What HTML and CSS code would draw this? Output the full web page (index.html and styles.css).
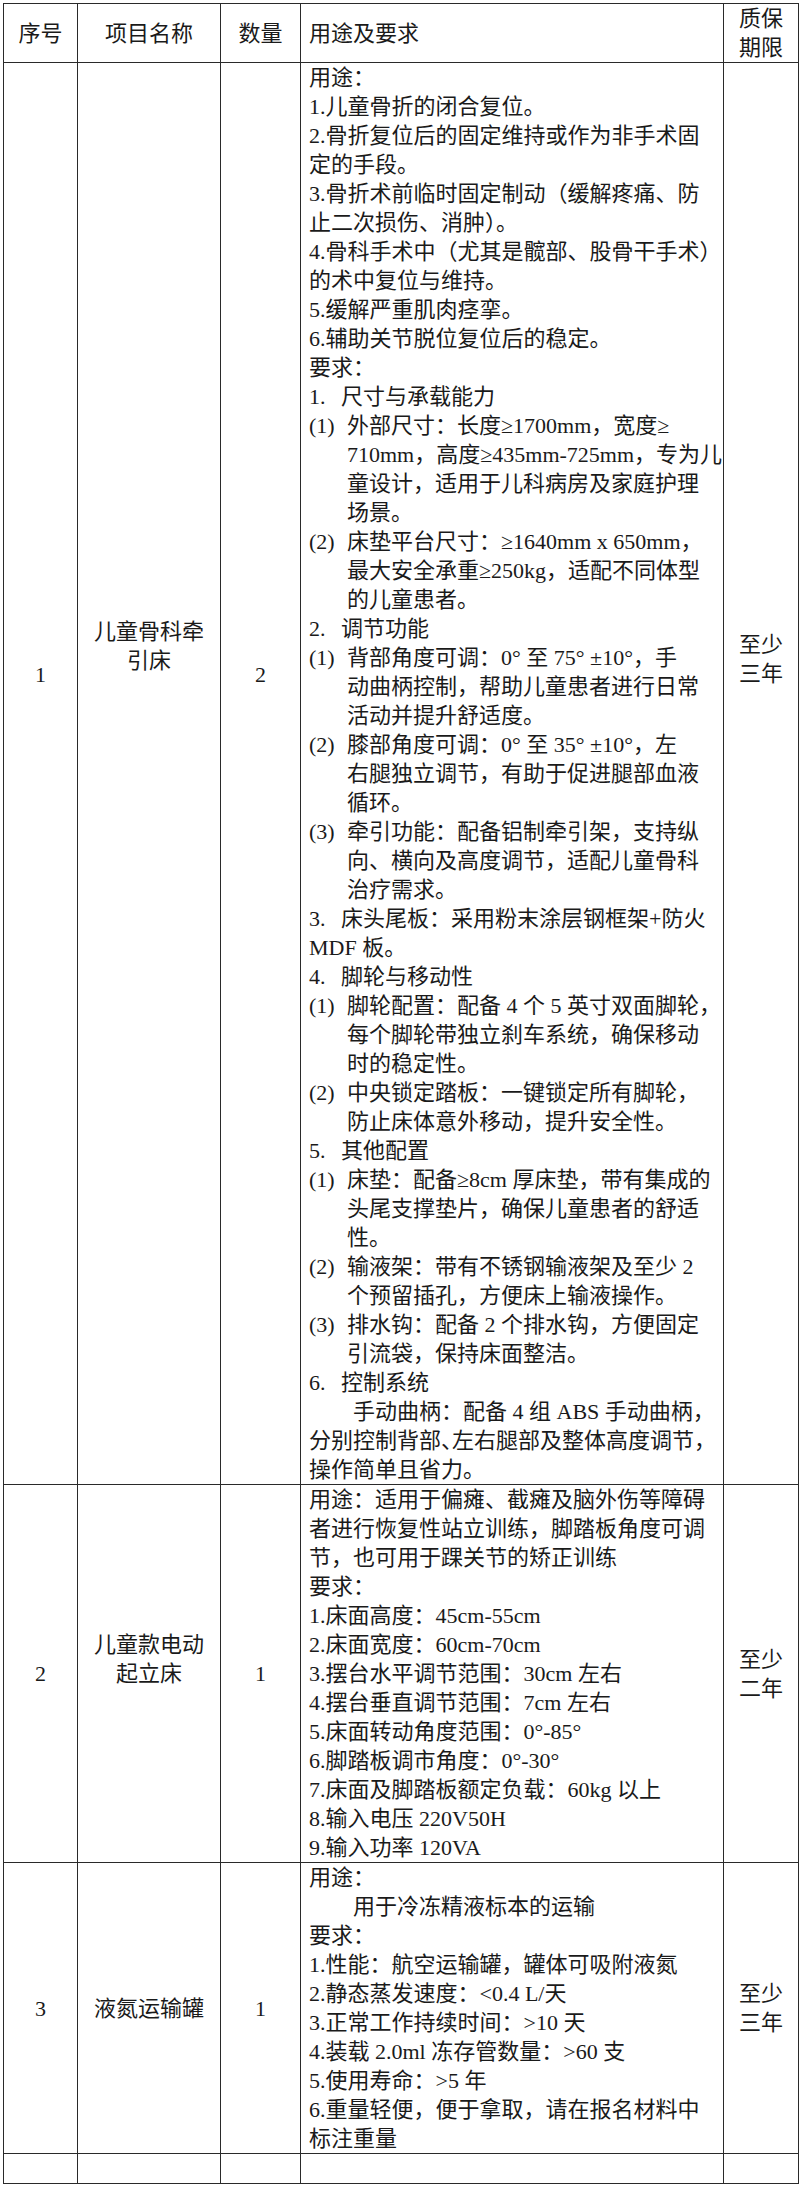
FILE: index.html
```html
<!DOCTYPE html>
<html lang="zh-CN">
<head>
<meta charset="utf-8">
<title>采购需求表</title>
<link rel="stylesheet" href="styles.css">
</head>
<body>
<div class="sheet">
<table class="spec">
  <colgroup>
    <col class="c-no"><col class="c-name"><col class="c-qty"><col class="c-desc"><col class="c-warr">
  </colgroup>
  <thead>
    <tr>
      <th class="center">序号</th>
      <th class="center">项目名称</th>
      <th class="center">数量</th>
      <th class="left">用途及要求</th>
      <th class="center">质保<br>期限</th>
    </tr>
  </thead>
  <tbody>
    <tr>
      <td class="center r1-num">1</td>
      <td class="center r1-name">儿童骨科牵<br>引床</td>
      <td class="center r1-num">2</td>
      <td class="desc">
        <p>用途：</p>
        <p>1.儿童骨折的闭合复位。</p>
        <p>2.骨折复位后的固定维持或作为非手术固<br>定的手段。</p>
        <p>3.骨折术前临时固定制动（缓解疼痛、防<br>止二次损伤、消肿）。</p>
        <p>4.骨科手术中（尤其是髋部、股骨干手术）<br>的术中复位与维持。</p>
        <p>5.缓解严重肌肉痉挛。</p>
        <p>6.辅助关节脱位复位后的稳定。</p>
        <p>要求：</p>
        <p><span class="lead">1.</span>尺寸与承载能力</p>
        <p class="sub"><span class="tag">(1)</span><span class="body">外部尺寸：长度≥1700mm，宽度≥<br>710mm，高度≥435mm-725mm，专为儿<br>童设计，适用于儿科病房及家庭护理<br>场景。</span></p>
        <p class="sub"><span class="tag">(2)</span><span class="body">床垫平台尺寸：≥1640mm x 650mm，<br>最大安全承重≥250kg，适配不同体型<br>的儿童患者。</span></p>
        <p><span class="lead">2.</span>调节功能</p>
        <p class="sub"><span class="tag">(1)</span><span class="body">背部角度可调：0° 至 75° ±10°，手<br>动曲柄控制，帮助儿童患者进行日常<br>活动并提升舒适度。</span></p>
        <p class="sub"><span class="tag">(2)</span><span class="body">膝部角度可调：0° 至 35° ±10°，左<br>右腿独立调节，有助于促进腿部血液<br>循环。</span></p>
        <p class="sub"><span class="tag">(3)</span><span class="body">牵引功能：配备铝制牵引架，支持纵<br>向、横向及高度调节，适配儿童骨科<br>治疗需求。</span></p>
        <p><span class="lead">3.</span>床头尾板：采用粉末涂层钢框架+防火<br>MDF 板。</p>
        <p><span class="lead">4.</span>脚轮与移动性</p>
        <p class="sub"><span class="tag">(1)</span><span class="body">脚轮配置：配备 4 个 5 英寸双面脚轮<span class="halt">，</span><br>每个脚轮带独立刹车系统，确保移动<br>时的稳定性。</span></p>
        <p class="sub"><span class="tag">(2)</span><span class="body">中央锁定踏板：一键锁定所有脚轮，<br>防止床体意外移动，提升安全性。</span></p>
        <p><span class="lead">5.</span>其他配置</p>
        <p class="sub"><span class="tag">(1)</span><span class="body">床垫：配备≥8cm 厚床垫，带有集成的<br>头尾支撑垫片，确保儿童患者的舒适<br>性。</span></p>
        <p class="sub"><span class="tag">(2)</span><span class="body">输液架：带有不锈钢输液架及至少 2<br>个预留插孔，方便床上输液操作。</span></p>
        <p class="sub"><span class="tag">(3)</span><span class="body">排水钩：配备 2 个排水钩，方便固定<br>引流袋，保持床面整洁。</span></p>
        <p><span class="lead">6.</span>控制系统</p>
        <p class="indent">手动曲柄：配备 4 组 ABS 手动曲柄<span class="halt">，</span><br>分别控制背部<span class="halt">、</span>左右腿部及整体高度调节<span class="halt">，</span><br>操作简单且省力。</p>
      </td>
      <td class="center r1-warr">至少<br>三年</td>
    </tr>
    <tr>
      <td class="center">2</td>
      <td class="center lift">儿童款电动<br>起立床</td>
      <td class="center">1</td>
      <td class="desc">
        <p>用途：适用于偏瘫、截瘫及脑外伤等障碍<br>者进行恢复性站立训练，脚踏板角度可调<br>节，也可用于踝关节的矫正训练</p>
        <p>要求：</p>
        <p>1.床面高度：45cm-55cm</p>
        <p>2.床面宽度：60cm-70cm</p>
        <p>3.摆台水平调节范围：30cm 左右</p>
        <p>4.摆台垂直调节范围：7cm 左右</p>
        <p>5.床面转动角度范围：0°-85°</p>
        <p>6.脚踏板调市角度：0°-30°</p>
        <p>7.床面及脚踏板额定负载：60kg 以上</p>
        <p>8.输入电压 220V50H</p>
        <p>9.输入功率 120VA</p>
      </td>
      <td class="center">至少<br>二年</td>
    </tr>
    <tr>
      <td class="center">3</td>
      <td class="center">液氮运输罐</td>
      <td class="center">1</td>
      <td class="desc">
        <p>用途：</p>
        <p class="indent">用于冷冻精液标本的运输</p>
        <p>要求：</p>
        <p>1.性能：航空运输罐，罐体可吸附液氮</p>
        <p>2.静态蒸发速度：&lt;0.4 L/天</p>
        <p>3.正常工作持续时间：&gt;10 天</p>
        <p>4.装载 2.0ml 冻存管数量：&gt;60 支</p>
        <p>5.使用寿命：&gt;5 年</p>
        <p>6.重量轻便，便于拿取，请在报名材料中<br>标注重量</p>
      </td>
      <td class="center">至少<br>三年</td>
    </tr>
    <tr class="blank">
      <td></td><td></td><td></td><td></td><td></td>
    </tr>
  </tbody>
</table>
</div>
</body>
</html>
```

FILE: styles.css
```css
html, body {
  margin: 0;
  padding: 0;
  background: #ffffff;
}

.sheet {
  padding: 3px 0 0 3px;
}

.spec {
  width: 795px;
  table-layout: fixed;
  border-collapse: collapse;
  font-family: "Liberation Serif", "Noto Sans CJK SC", serif;
  font-size: 22px;
  line-height: 29px;
  color: #1a1a1a;
}

.c-no { width: 74px; }
.c-name { width: 143px; }
.c-qty { width: 80px; }
.c-desc { width: 423px; }
.c-warr { width: 75px; }

.spec th,
.spec td {
  border: 1px solid #2a2a2a;
  padding: 0;
  font-weight: normal;
  vertical-align: middle;
}

.spec th.left {
  text-align: left;
  padding-left: 8px;
}

.center {
  text-align: center;
}

.spec td.desc {
  padding-left: 8px;
  vertical-align: top;
  overflow: visible;
}

.desc p {
  margin: 0;
  white-space: nowrap;
}

.lead {
  display: inline-block;
  width: 32px;
}

.sub {
  display: flex;
}

.sub .tag {
  flex: none;
  width: 38px;
}

.sub .body {
  display: block;
}

.indent {
  text-indent: 44px;
}

.halt {
  font-feature-settings: "halt" 1;
}

/* row 1 labels sit above the row's middle */
.spec td.r1-num { padding-bottom: 198px; }
.spec td.r1-name { padding-bottom: 256px; }
.spec td.r1-warr { padding-bottom: 230px; }

/* row 2 name carries a trailing empty line */
.spec td.lift { padding-bottom: 29px; }

.blank td {
  height: 29px;
}
```
